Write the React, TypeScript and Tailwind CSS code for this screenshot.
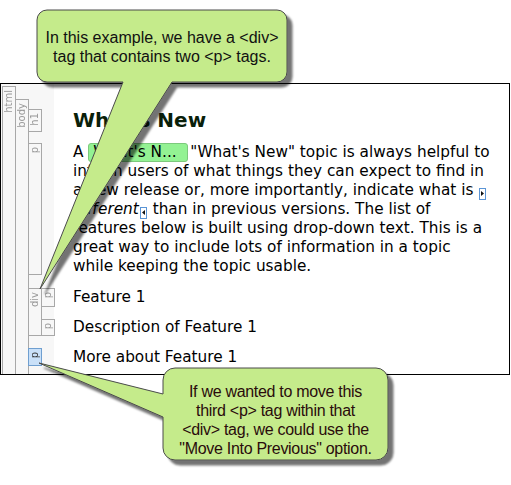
import React from "react";

type BarProps = { label: string; className?: string; blue?: boolean };

const Bar = ({ label, className = "", blue = false }: BarProps) => (
  <div
    className={`w-[14px] shrink-0 border flex flex-col items-center pt-[3px] ${
      blue ? "border-[#6f9fd0] bg-[#c9e0f8]" : "border-[#a8a8a8]"
    } ${className}`}
  >
    <span
      className={`[writing-mode:vertical-rl] rotate-180 text-[10px] leading-[12px] ${
        blue ? "text-[#333333]" : "text-[#999999]"
      }`}
      style={{ fontFamily: '"DejaVu Sans", sans-serif' }}
    >
      {label}
    </span>
  </div>
);

const Marker = ({ dir }: { dir: "r" | "l" }) => (
  <span className="inline-flex items-center justify-center w-[7px] h-[12px] border border-[#5b95d6] align-[-1px] mx-[1px]">
    <svg width="3" height="5" viewBox="0 0 3 5">
      {dir === "r" ? (
        <polygon points="0,0 3,2.5 0,5" fill="#111" />
      ) : (
        <polygon points="3,0 0,2.5 3,5" fill="#111" />
      )}
    </svg>
  </span>
);

export default function App() {
  const body = { fontFamily: '"DejaVu Sans", Verdana, sans-serif' };
  const arial = { fontFamily: '"Liberation Sans", Arial, sans-serif' };
  return (
    <div className="relative w-[511px] h-[485px] overflow-hidden bg-white pt-[83px]">
      {/* Panel */}
      <div
        className="w-[510px] h-[292px] border border-black flex pl-[1px] bg-[linear-gradient(to_right,#f7f7f7_53px,#ffffff_53px)] text-black"
        style={body}
      >
        <Bar label="html" className="mt-[2px] border-b-0" />
        <Bar label="body" className="-ml-px mt-[15px] border-b-0" />
        <div className="-ml-px flex flex-col pt-[25px] flex-1">
          {/* h1 */}
          <div className="flex h-[23px]">
            <div className="w-[26px] shrink-0 flex">
              <Bar label="h1" className="h-full" />
            </div>
            <div className="pl-[19px] flex items-center text-[20px] font-bold text-[#0a1f0a] leading-[23px]">
              What's New
            </div>
          </div>
          {/* p */}
          <div className="flex mt-[11px]">
            <div className="w-[26px] shrink-0 flex">
              <Bar label="p" className="h-[132px]" />
            </div>
            <div className="pl-[19px] text-[15.3px] leading-[19px] whitespace-nowrap">
              <div>
                A{" "}
                <span className="inline-block h-[19px] w-[100px] align-top rounded-[3px] border border-[#7cc97c] bg-[#93f293] pl-[4px] leading-[17px] mr-[2px]">
                  What's N...
                </span>
                "What's New" topic is always helpful to
              </div>
              <div>inform users of what things they can expect to find in</div>
              <div>
                a new release or, more importantly, indicate what is <Marker dir="r" />
              </div>
              <div>
                <i>different</i>
                <Marker dir="l" /> than in previous versions. The list of
              </div>
              <div>features below is built using drop-down text. This is a</div>
              <div>great way to include lots of information in a topic</div>
              <div>while keeping the topic usable.</div>
            </div>
          </div>
          {/* div */}
          <div className="flex mt-[12px]">
            <Bar label="div" className="h-[48px]" />
            <div className="-ml-px flex flex-col">
              <div className="flex h-[19px]">
                <Bar label="p" className="h-full" />
                <div className="pl-[18px] text-[15.3px] leading-[19px] whitespace-nowrap">
                  Feature 1
                </div>
              </div>
              <div className="flex h-[17px] mt-[12px]">
                <Bar label="p" className="h-full" />
                <div className="pl-[18px] text-[15.3px] leading-[17px] whitespace-nowrap">
                  Description of Feature 1
                </div>
              </div>
            </div>
          </div>
          {/* blue p */}
          <div className="flex mt-[12px] h-[18px]">
            <div className="w-[26px] shrink-0 flex">
              <Bar label="p" blue className="h-full" />
            </div>
            <div className="pl-[19px] text-[15.3px] leading-[18px] whitespace-nowrap">
              More about Feature 1
            </div>
          </div>
        </div>
      </div>

      {/* Callout shapes */}
      <svg
        className="absolute left-0 top-0 pointer-events-none"
        width="511"
        height="485"
        viewBox="0 0 511 485"
      >
        <defs>
          <filter id="sh" x="-20%" y="-20%" width="140%" height="140%">
            <feDropShadow dx="5" dy="5" stdDeviation="1" floodColor="#000" floodOpacity="0.55" />
          </filter>
        </defs>
        <path
          d="M 47 10 H 277 A 10 10 0 0 1 287 20 V 72 A 10 10 0 0 1 277 82 H 172 L 40 289 L 123 82 H 47 A 10 10 0 0 1 37 72 V 20 A 10 10 0 0 1 47 10 Z"
          fill="#c5eb8b"
          stroke="#4a4a4a"
          strokeWidth="1"
          filter="url(#sh)"
        />
        <path
          d="M 175 368 H 376 A 12 12 0 0 1 388 380 V 448 A 12 12 0 0 1 376 460 H 175 A 12 12 0 0 1 163 448 V 417 L 39 363 L 163 394 V 380 A 12 12 0 0 1 175 368 Z"
          fill="#c5eb8b"
          stroke="#4a4a4a"
          strokeWidth="1"
          filter="url(#sh)"
        />
      </svg>

      {/* Callout texts */}
      <div
        className="absolute left-[37px] top-[10px] w-[250px] h-[72px] flex flex-col items-center justify-center pt-[3px] text-[16px] leading-[18.5px] text-[#111111] text-center"
        style={arial}
      >
        <div>In this example, we have a &lt;div&gt;</div>
        <div>tag that contains two &lt;p&gt; tags.</div>
      </div>
      <div
        className="absolute left-[163px] top-[368px] w-[225px] h-[92px] flex flex-col items-center justify-center pt-[12px] text-[16px] leading-[19px] text-[#2a0c0c] text-center tracking-[-0.3px]"
        style={arial}
      >
        <div>If we wanted to move this</div>
        <div>third &lt;p&gt; tag within that</div>
        <div>&lt;div&gt; tag, we could use the</div>
        <div>"Move Into Previous" option.</div>
      </div>
    </div>
  );
}
